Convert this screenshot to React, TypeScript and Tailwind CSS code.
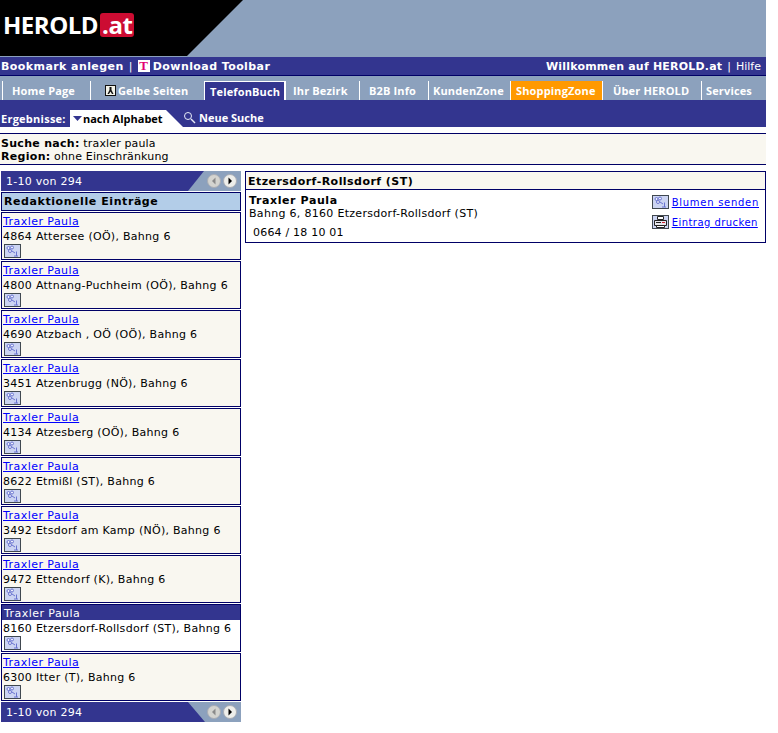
const entries = [
  { name: 'Traxler Paula', address: '4864 Attersee (OÖ), Bahng 6' },
  { name: 'Traxler Paula', address: '4800 Attnang-Puchheim (OÖ), Bahng 6' },
  { name: 'Traxler Paula', address: '4690 Atzbach , OÖ (OÖ), Bahng 6' },
  { name: 'Traxler Paula', address: '3451 Atzenbrugg (NÖ), Bahng 6' },
  { name: 'Traxler Paula', address: '4134 Atzesberg (OÖ), Bahng 6' },
  { name: 'Traxler Paula', address: '8622 Etmißl (ST), Bahng 6' },
  { name: 'Traxler Paula', address: '3492 Etsdorf am Kamp (NÖ), Bahng 6' },
  { name: 'Traxler Paula', address: '9472 Ettendorf (K), Bahng 6' },
  { name: 'Traxler Paula', address: '8160 Etzersdorf-Rollsdorf (ST), Bahng 6', active: true },
  { name: 'Traxler Paula', address: '6300 Itter (T), Bahng 6' },
];

const tabs = [
  { label: 'Home Page', width: 'w-[88px]', pad: 'pl-[9px]' },
  { label: 'Gelbe Seiten', width: 'w-[114px]', pad: 'pl-[14px]', icon: true },
  { label: 'TelefonBuch', width: 'w-[81px]', pad: 'pl-[5px]', active: true },
  { label: 'Ihr Bezirk', width: 'w-[74px]', pad: 'pl-[7px]' },
  { label: 'B2B Info', width: 'w-[69px]', pad: 'pl-[9px]' },
  { label: 'KundenZone', width: 'w-[82px]', pad: 'pl-[4px]' },
  { label: 'ShoppingZone', width: 'w-[92px]', pad: 'pl-[5px]', orange: true },
  { label: 'Über HEROLD', width: 'w-[99px]', pad: 'pl-[10px]' },
  { label: 'Services', width: 'w-[64px]', pad: 'pl-[4px]' },
];

// small flower icon, the "Blumen senden" button
const FlowerIcon = () => (
  <svg width="17" height="14" viewBox="0 0 17 14" className="block shrink-0">
    <rect x="0.5" y="0.5" width="16" height="13" fill="#ccd4f2" stroke="#404850" />
    <circle cx="4.500" cy="4" r="1.500" fill="#eef0fb" stroke="#6a74d0" />
    <circle cx="8" cy="3.500" r="1.500" fill="#eef0fb" stroke="#6a74d0" />
    <circle cx="6" cy="7" r="1.500" fill="#eef0fb" stroke="#6a74d0" />
    <path d="M8 7l3 2M12.500 7.500v4.500M10 12h4" stroke="#6a74d0" strokeWidth="1" fill="none" />
  </svg>
);

const PrinterIcon = () => (
  <svg width="17" height="14" viewBox="0 0 17 14" className="block shrink-0">
    <rect x="0.5" y="0.5" width="16" height="13" fill="#ccd4f2" stroke="#404850" />
    <path d="M5.500 1.500h6v3h-6z" fill="#fff" stroke="#222" />
    <path d="M2.500 5.500h12v5h-12z" fill="#e8e8ee" stroke="#222" />
    <path d="M4.500 10.500h8v2h-8z" fill="#fff" stroke="#222" />
    <path d="M4 7.500h5" stroke="#222" />
    <path d="M10 7.500h3" stroke="#d02030" />
  </svg>
);

const PagerArrows = () => (
  <div className="flex items-center gap-[2px]">
    <svg width="14" height="14" viewBox="0 0 14 14" className="block">
      <circle cx="7" cy="7" r="6.500" fill="#d4d4d0" stroke="#a9adb4" />
      <path d="M8.500 3.500v7L5 7z" fill="#8a8a8a" />
    </svg>
    <svg width="14" height="14" viewBox="0 0 14 14" className="block">
      <circle cx="7" cy="7" r="6.500" fill="#eeeeea" stroke="#a9adb4" />
      <path d="M5.500 3.500v7L9 7z" fill="#000" />
    </svg>
  </div>
);

const Pager = ({ flip }: { flip?: boolean }) => (
  <div className="relative flex h-5 items-center bg-[#33358f] pl-[5px] tracking-[0.25px] text-white">
    <span>1-10 von 294</span>
    <div
      className={`absolute right-0 top-0 h-5 w-[53px] bg-[#8ca1bd] ${
        flip ? '[clip-path:polygon(0_0,100%_0,100%_100%,17px_100%)]' : '[clip-path:polygon(16px_0,100%_0,100%_100%,0_100%)]'
      }`}
    />
    <div className="absolute right-[4px] top-[3px]">
      <PagerArrows />
    </div>
  </div>
);

const ResultCard = ({ name, address, active }: { name: string; address: string; active?: boolean }) => (
  <div className={`mt-px h-[48px] border border-[#000066] ${active ? 'bg-white' : 'bg-[#f9f7f0]'}`}>
    {active ? (
      <div className="mb-px h-[15px] bg-[#33358f] pl-[2px] leading-[17px] tracking-[0.45px] text-white">{name}</div>
    ) : (
      <a href="#" className="block h-[16px] pl-[1px] leading-[17px] tracking-[0.45px] text-[#0000ff] underline">
        {name}
      </a>
    )}
    <div className="h-[15px] pl-[1px] leading-[15px] tracking-[0.28px] text-black">{address}</div>
    <div className="pl-[2px]">
      <FlowerIcon />
    </div>
  </div>
);

export default function App() {
  return (
    <div className="w-[766px] bg-white text-[11px] leading-[15px] font-['DejaVu_Sans','Liberation_Sans',sans-serif] text-black">
      {/* Logo banner */}
      <div className="h-[57px] bg-[#8ca1bd]">
        <div className="flex h-[56px] w-[243px] items-start bg-black pl-[3px] pt-[13px] [clip-path:polygon(0_0,100%_0,187px_100%,0_100%)]">
          <span className="text-[24px] leading-[24px] font-bold text-white font-['Open_Sans',sans-serif] tracking-[-0.5px]">HEROLD</span>
          <span className="ml-[2px] rounded-[3px] bg-[#cc0c32] px-[2px] text-[24px] leading-[24px] font-bold text-white font-['Open_Sans',sans-serif] tracking-[-0.5px]">.at</span>
        </div>
      </div>

      {/* Top bar */}
      <div className="flex h-[19px] items-center justify-between border-b border-[#000066] bg-[#33358f] pl-[1px] pr-[5px] text-white">
        <div className="flex items-center font-bold tracking-[0.42px]">
          <span>Bookmark anlegen</span>
          <span className="mx-[5px] font-normal">|</span>
          <span className="mr-[3px] flex h-[12px] w-[12px] items-center justify-center bg-white text-[13px] leading-[12px] font-bold text-[#e20074] font-['Liberation_Serif',serif]">T</span>
          <span>Download Toolbar</span>
        </div>
        <div className="flex items-center">
          <span className="font-bold tracking-[0.2px]">Willkommen auf HEROLD.at</span>
          <span className="ml-[5px] mr-[5px]">|</span>
          <span>Hilfe</span>
        </div>
      </div>

      {/* Main nav */}
      <div className="flex h-[24px] items-end bg-[#8ca1bd] pl-[2px] font-bold tracking-[0.15px] text-white font-['Open_Sans',sans-serif]">
        {tabs.map((tab) => (
          <div
            key={tab.label}
            className={`flex h-[19px] shrink-0 items-center border-l border-white ${tab.width} ${tab.pad} ${
              tab.active ? 'border-t border-r bg-[#33358f]' : ''
            } ${tab.orange ? 'bg-[#ff9900]' : ''}`}
          >
            {tab.icon && (
              <svg width="11" height="11" viewBox="0 0 11 11" className="mr-[2px] shrink-0">
                <rect x="0.5" y="0.5" width="10" height="10" fill="#f2f2e8" stroke="#111" />
                <path d="M4.500 2h2v3l2 4H7L5.500 6.500 4 9H2.500l2-4z" fill="#111" />
              </svg>
            )}
            {tab.label}
          </div>
        ))}
      </div>

      {/* Result mode bar */}
      <div className="flex h-[27px] items-end bg-[#33358f] pl-[1px] font-bold text-white font-['Open_Sans',sans-serif]">
        <span className="mb-[1px] w-[69px] tracking-[0.25px]">Ergebnisse:</span>
        <div className="flex h-[17px] w-[113px] items-center bg-white pl-[3px] text-black [clip-path:polygon(0_0,96px_0,100%_100%,0_100%)]">
          <svg width="9" height="5" viewBox="0 0 9 5" className="mr-[1px]">
            <path d="M0 0h9L4.500 5z" fill="#33358f" />
          </svg>
          nach Alphabet
        </div>
        <div className="mb-[2px] flex items-center">
          <svg width="13" height="13" viewBox="0 0 13 13" className="mr-[3px]">
            <circle cx="5" cy="5" r="3.500" fill="#33358f" stroke="#e8ecf8" />
            <path d="M8 8l4 4" stroke="#e8ecf8" strokeWidth="1.500" />
          </svg>
          Neue Suche
        </div>
      </div>

      {/* Search summary */}
      <div className="mt-[6px] h-[32px] border-y border-[#000066] bg-[#f9f7f0] pl-[1px] pt-[3px] tracking-[0.15px]">
        <div className="h-[13px] leading-[14px]">
          <b className="tracking-[0.3px]">Suche nach:</b> traxler paula
        </div>
        <div className="h-[13px] leading-[13px]">
          <b className="tracking-[0.3px]">Region:</b> ohne Einschränkung
        </div>
      </div>

      <div className="mt-[6px] flex items-start">
        {/* Result list */}
        <div className="ml-px w-[240px] shrink-0">
          <Pager />
          <div className="mt-px h-[19px] border border-[#000066] bg-[#b3cde8] pl-[2px] leading-[18px] font-bold tracking-[0.57px]">
            Redaktionelle Einträge
          </div>
          {entries.map((entry) => (
            <ResultCard key={entry.address} {...entry} />
          ))}
          <div className="mt-px">
            <Pager flip />
          </div>
        </div>

        {/* Detail panel */}
        <div className="ml-[4px] h-[72px] w-[521px] border border-[#000066]">
          <div className="h-[18px] border-b border-[#000066] bg-[#f9f7f0] pl-[2px] leading-[19px] font-bold tracking-[0.46px]">
            Etzersdorf-Rollsdorf (ST)
          </div>
          <div className="flex justify-between pl-[3px] pr-[6px] pt-[4px]">
            <div>
              <div className="h-[13px] leading-[14px] font-bold tracking-[0.6px]">Traxler Paula</div>
              <div className="h-[14px] leading-[14px] tracking-[0.3px]">Bahng 6, 8160 Etzersdorf-Rollsdorf (ST)</div>
              <div className="mt-[4px] pl-[4px] tracking-[0.2px]">0664 / 18 10 01</div>
            </div>
            <div className="pt-[1px] text-[10px] text-[#0000ff] underline">
              <div className="flex h-[14px] items-center gap-[3px] tracking-[0.72px]">
                <FlowerIcon />
                <a href="#">Blumen senden</a>
              </div>
              <div className="mt-[6px] flex h-[14px] items-center gap-[3px] tracking-[0.45px]">
                <PrinterIcon />
                <a href="#">Eintrag drucken</a>
              </div>
            </div>
          </div>
        </div>
      </div>
    </div>
  );
}
